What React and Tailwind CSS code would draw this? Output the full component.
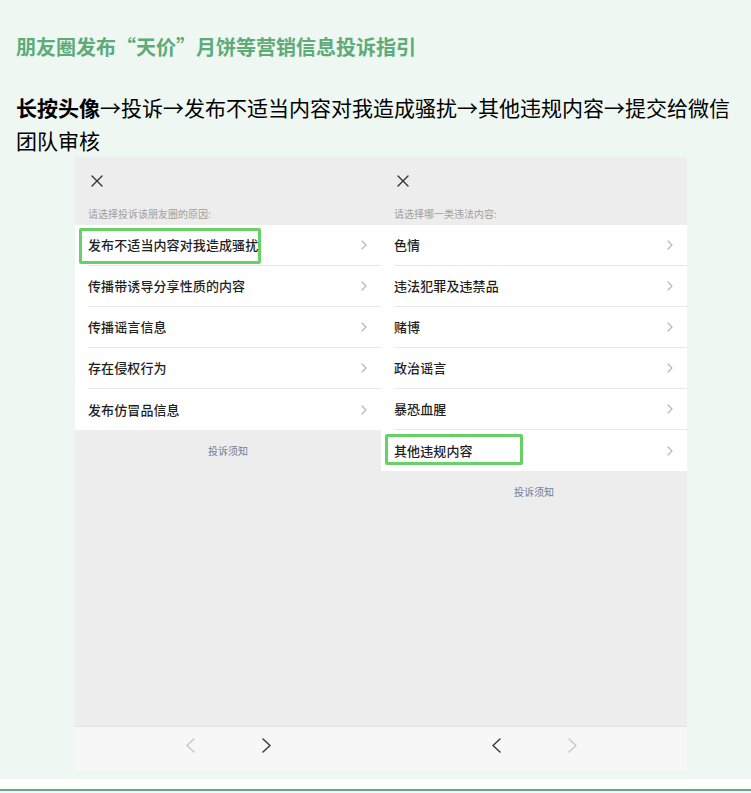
import React from "react";

const CJK = "font-['Noto_Sans_CJK_SC','Noto_Sans',sans-serif]";

function Chevron({ dir = "right", color = "#b8b8b8", w = 6, h = 10, sw = 1.2 }) {
  const pts = dir === "right" ? `1,1 ${w - 1},${h / 2} 1,${h - 1}` : `${w - 1},1 1,${h / 2} ${w - 1},${h - 1}`;
  return (
    <svg width={w} height={h} viewBox={`0 0 ${w} ${h}`} fill="none">
      <polyline points={pts} stroke={color} strokeWidth={sw} strokeLinecap="round" strokeLinejoin="round" />
    </svg>
  );
}

function CloseIcon() {
  return (
    <svg width="12" height="12" viewBox="0 0 12 12" fill="none">
      <path d="M1 1 L11 11 M11 1 L1 11" stroke="#333" strokeWidth="1.4" strokeLinecap="round" />
    </svg>
  );
}

function Panel({ label, rows, hi, box, prevActive, nextActive }) {
  return (
    <div className="w-[306px] h-[613px] flex flex-col bg-[#ededed]">
      <div className="flex flex-col pt-[18px] pb-[4px]">
        <div className="pl-[16px] h-[12px]">
          <CloseIcon />
        </div>
        <div className="mt-[20px] pl-[13px] h-[14px] leading-[14px] text-[10px] text-[#9e9e9e]">{label}</div>
      </div>
      <div className="flex flex-col bg-white">
        {rows.map((r, i) => (
          <div key={r} className="relative h-[41px] pl-[13px]">
            <div
              className={
                "h-full flex items-center justify-between pr-[14px] " +
                (i < rows.length - 1 ? "border-b border-[#e8e8e8]" : "")
              }
            >
              <span className="text-[13px] font-medium text-[#1f1f1f] tracking-[0.1px]">{r}</span>
              <Chevron />
            </div>
            {i === hi && (
              <div
                className="absolute left-[4px] border-[3px] border-[#67d166] rounded-[2px]"
                style={{ top: box.top, width: box.w, height: box.h }}
              />
            )}
          </div>
        ))}
      </div>
      <div className="pt-[14px] h-[14px] box-content leading-[14px] text-center text-[10px] text-[#6f7d99]">投诉须知</div>
      <div className="flex-1" />
      <div className="h-[44px] pb-[6px] bg-[#f7f7f7] border-t border-[#e2e2e2] flex items-center justify-center gap-[67px]">
        <Chevron dir="left" color={prevActive ? "#3c3c3c" : "#c9c9c9"} w={9} h={15} sw={1.5} />
        <Chevron dir="right" color={nextActive ? "#3c3c3c" : "#c9c9c9"} w={9} h={15} sw={1.5} />
      </div>
    </div>
  );
}

export default function App() {
  return (
    <div className={"w-[751px] min-h-[793px] bg-white " + CJK}>
      <div className="bg-[#eef7f2] pl-[16px] pr-[16px] pt-[33px] pb-[9px]">
        <h1 className="text-[20px] leading-[28px] font-bold text-[#5cab79]">
          朋友圈发布“天价”月饼等营销信息投诉指引
        </h1>
        <p className="mt-[30px] text-[21px] leading-[33px] text-black">
          <b className="font-bold">长按头像</b>→投诉→发布不适当内容对我造成骚扰→其他违规内容→提交给微信团队审核
        </p>
        <div className="ml-[59px] w-[612px] flex">
          <Panel
            label="请选择投诉该朋友圈的原因:"
            rows={["发布不适当内容对我造成骚扰", "传播带诱导分享性质的内容", "传播谣言信息", "存在侵权行为", "发布仿冒品信息"]}
            hi={0}
            box={{ top: 3, w: 182, h: 36 }}
            prevActive={false}
            nextActive={true}
          />
          <Panel
            label="请选择哪一类违法内容:"
            rows={["色情", "违法犯罪及违禁品", "赌博", "政治谣言", "暴恐血腥", "其他违规内容"]}
            hi={5}
            box={{ top: 4, w: 138, h: 31 }}
            prevActive={true}
            nextActive={false}
          />
        </div>
      </div>
      <div className="h-[10px]" />
      <div className="h-[2px] bg-[#5fae7c]" />
    </div>
  );
}
